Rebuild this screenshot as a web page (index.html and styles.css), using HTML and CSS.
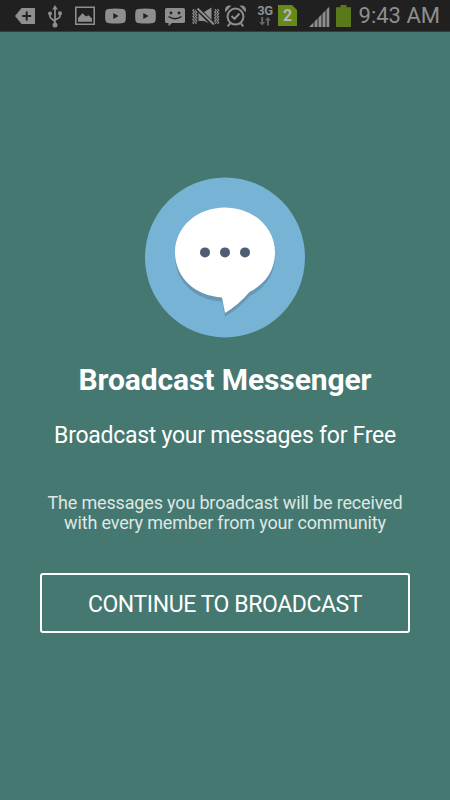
FILE: index.html
```html
<!DOCTYPE html>
<html lang="en">
<head>
    <meta charset="UTF-8">
    <meta name="viewport" content="width=device-width, initial-scale=1.0">
    <title>Broadcast Messenger</title>
    <link rel="stylesheet" href="styles.css">
</head>
<body>
    <header class="status-bar">
        <div class="notifications">
            <svg class="tag" width="20" height="32" viewBox="0 0 20 32">
                <path d="M6.5 8H20V24H6.5L0 16Z" fill="#8e8e8e"/>
                <path d="M11.7 11.5V20.5M7.2 16H16.2" stroke="#202020" stroke-width="2"/>
            </svg>
            <svg width="14" height="32" viewBox="0 0 14 32" fill="none" stroke="#8e8e8e" stroke-width="1.7">
                <path d="M7 8V25M2 13V16.5Q2 18 4 19L7 21.5M12 13V16Q12 17.5 10 18.5L7 20"/>
                <path d="M7 5L9.8 9.5H4.2Z" fill="#8e8e8e" stroke="none"/>
                <circle cx="7" cy="25" r="2.5" fill="#8e8e8e" stroke="none"/>
                <circle cx="2" cy="13.4" r="2" fill="#8e8e8e" stroke="none"/>
                <path d="M10.2 11.5H13.8V15H10.2Z" fill="#8e8e8e" stroke="none"/>
            </svg>
            <svg width="20" height="32" viewBox="0 0 20 32">
                <path d="M.8 7.3H19.2V24.2H.8Z" fill="none" stroke="#8e8e8e" stroke-width="1.6"/>
                <path d="M3 21.7V18L7.5 13.2L11 16.5L13.5 15.2L17 18.5V21.7Z" fill="#8e8e8e"/>
            </svg>
            <svg width="21" height="32" viewBox="0 0 21 32">
                <path d="M3 9Q10.5 8 18 9Q20.3 9.2 20.6 11.5Q21.1 16 20.6 20.5Q20.3 22.8 18 23Q10.5 24 3 23Q.7 22.8 .4 20.5Q-.1 16 .4 11.5Q.7 9.2 3 9Z" fill="#8e8e8e"/>
                <path d="M8.3 13L13.5 16L8.3 19Z" fill="#202020"/>
            </svg>
            <svg width="21" height="32" viewBox="0 0 21 32">
                <path d="M3 9Q10.5 8 18 9Q20.3 9.2 20.6 11.5Q21.1 16 20.6 20.5Q20.3 22.8 18 23Q10.5 24 3 23Q.7 22.8 .4 20.5Q-.1 16 .4 11.5Q.7 9.2 3 9Z" fill="#8e8e8e"/>
                <path d="M8.3 13L13.5 16L8.3 19Z" fill="#202020"/>
            </svg>
            <svg width="20" height="32" viewBox="0 0 20 32">
                <path d="M1.5 8H18.5Q20 8 20 9.5V21.5Q20 23 18.5 23H7L3.5 26.3V23H1.5Q0 23 0 21.5V9.5Q0 8 1.5 8Z" fill="#8e8e8e"/>
                <circle cx="6" cy="13" r="1.4" fill="#202020"/>
                <circle cx="14" cy="13" r="1.4" fill="#202020"/>
                <path d="M3.5 16.5Q10 21 16.5 16.5" fill="none" stroke="#202020" stroke-width="1.5"/>
            </svg>
            <svg class="vibrate" width="28" height="32" viewBox="0 0 28 32" fill="none" stroke="#8e8e8e">
                <path d="M2 9L.8 10.5L2.4 12L.8 13.5L2.4 15L.8 16.5L2.4 18L.8 19.5L2.4 21L.8 22.5L2 24M4.5 9L3.3 10.5L4.9 12L3.3 13.5L4.9 15L3.3 16.5L4.9 18L3.3 19.5L4.9 21L3.3 22.5L4.5 24M23 9L24.2 10.5L22.6 12L24.2 13.5L22.6 15L24.2 16.5L22.6 18L24.2 19.5L22.6 21L24.2 22.5L23 24M25.5 9L26.7 10.5L25.1 12L26.7 13.5L25.1 15L26.7 16.5L25.1 18L26.7 19.5L25.1 21L26.7 22.5L25.5 24" stroke-width="1.1"/>
                <path d="M6.5 12H12L19.5 7.5V24.5L12 21H6.5Z" fill="#8e8e8e" stroke="none"/>
                <path d="M4.5 7.5L22 25.5" stroke="#202020" stroke-width="4.5"/>
                <path d="M5.5 8.5L22 24.5" stroke-width="2"/>
            </svg>
            <svg class="alarm" width="21" height="32" viewBox="0 0 21 32" fill="none" stroke="#8e8e8e" stroke-width="2">
                <circle cx="10.5" cy="16.6" r="8"/>
                <path d="M6.5 16L9.5 18.8L14.5 13.5M5 23.5L2.7 26.3M16 23.5L18.3 26.3"/>
                <path d="M.8 11Q0 6 5 6.2ZM20.2 11Q21 6 16 6.2Z" fill="#8e8e8e" stroke-width="1.2"/>
            </svg>
        </div>
        <div class="network">
            <span>3G</span>
            <svg width="12" height="9" viewBox="0 0 12 9" fill="#666">
                <path d="M2.2 0H4.2V5H6.2L3.2 8.5L.2 5H2.2ZM7.9 8.5H9.9V3.5H11.8L8.9 0L6 3.5H7.9Z"/>
            </svg>
        </div>
        <div class="sim">2</div>
        <svg class="signal" width="21" height="32" viewBox="0 0 21 32" fill="#8e8e8e">
            <path d="M0 27L4.5 22.5V27ZM5.5 21.5L8.5 18.5V27H5.5ZM9.5 17.5L12.5 14.5V27H9.5ZM13.5 13.5L16.5 10.5V27H13.5ZM17.5 9.5L20.3 6.7V27H17.5Z"/>
        </svg>
        <svg class="battery" width="15" height="32" viewBox="0 0 15 32">
            <path d="M4.5 5H10.5V7.2H15V27H0V7.2H4.5Z" fill="#59791a"/>
        </svg>
        <time class="clock">9:43 AM</time>
    </header>

    <main class="welcome">
        <svg class="logo" width="160" height="161" viewBox="0 -.4 160 161">
            <circle cx="80" cy="80" r="80" fill="#77b3d4"/>
            <path d="M80 34C52 34 30 53.5 30 79C30 104 50 122.5 77 124L80 139Q94 131 104.5 118.5C120 111 130 97 130 79C130 54 108 34 80 34Z" fill="#6797b5"/>
            <path d="M80 30C52 30 30 49.5 30 75C30 100 50 118.5 77 120L80 135.5Q94 127 104.5 114.5C120 107 130 93 130 75C130 50 108 30 80 30Z" fill="#fff"/>
            <g fill="#4f5d73">
                <circle cx="60" cy="75" r="5"/>
                <circle cx="80" cy="75" r="5"/>
                <circle cx="100" cy="75" r="5"/>
            </g>
        </svg>
        <h1>Broadcast Messenger</h1>
        <p class="tagline">Broadcast your messages for Free</p>
        <p class="description">The messages you broadcast will be received<br>with every member from your community</p>
        <button class="continue" type="button">CONTINUE TO BROADCAST</button>
    </main>
</body>
</html>
```

FILE: styles.css
```css
* {
    margin: 0;
    padding: 0;
    box-sizing: border-box;
}

body {
    height: 800px;
    background: #457870;
    color: #fff;
    font-family: Roboto, sans-serif;
    overflow: hidden;
}

svg {
    display: block;
    flex-shrink: 0;
}

.status-bar {
    display: flex;
    height: 32px;
    padding: 0 10px 0 15px;
    background: #202020;
    border-bottom: 1px solid #2c403d;
    color: #8e8e8e;
}

.notifications {
    display: flex;
    gap: 9px;
}

.notifications .tag {
    margin-right: 4px;
}

.notifications svg:nth-child(2) {
    margin-right: 4px;
}

.notifications svg:nth-child(3) {
    margin-right: 1px;
}

.notifications .vibrate {
    margin-left: -2px;
}

.notifications .alarm {
    margin-left: -4px;
}

.network {
    display: flex;
    flex-direction: column;
    align-items: center;
    width: 18px;
    margin-left: 10px;
    padding-top: 4px;
    font-size: 13px;
    line-height: 13px;
    font-weight: bold;
    letter-spacing: -0.4px;
}

.sim {
    width: 19px;
    height: 21px;
    margin: 5px 0 0 4px;
    background: #66891c;
    clip-path: polygon(0 0, 14px 0, 100% 5px, 100% 100%, 0 100%);
    color: #b5b5b5;
    font-size: 16px;
    font-weight: bold;
    line-height: 22px;
    text-align: center;
}

.signal {
    margin-left: 12px;
}

.battery {
    margin-left: 6px;
}

.clock {
    margin-left: auto;
    font-size: 22px;
    line-height: 32px;
    white-space: nowrap;
}

.welcome {
    display: flex;
    flex-direction: column;
    align-items: center;
    padding: 145px 40px 0;
    text-align: center;
    white-space: nowrap;
}

h1 {
    margin-top: 24px;
    font-size: 30px;
    line-height: 36px;
    letter-spacing: -0.1px;
}

.tagline {
    margin-top: 22px;
    font-size: 23px;
    line-height: 32px;
    letter-spacing: -0.27px;
}

.description {
    margin-top: 41px;
    color: #dfe7e5;
    font-size: 18px;
    line-height: 20px;
    letter-spacing: -0.17px;
}

.continue {
    width: 370px;
    height: 60px;
    margin-top: 40px;
    padding-top: 2px;
    background: transparent;
    border: 2px solid #fff;
    border-radius: 3px;
    color: #fff;
    font-family: inherit;
    font-size: 23px;
    letter-spacing: -0.42px;
}
```
